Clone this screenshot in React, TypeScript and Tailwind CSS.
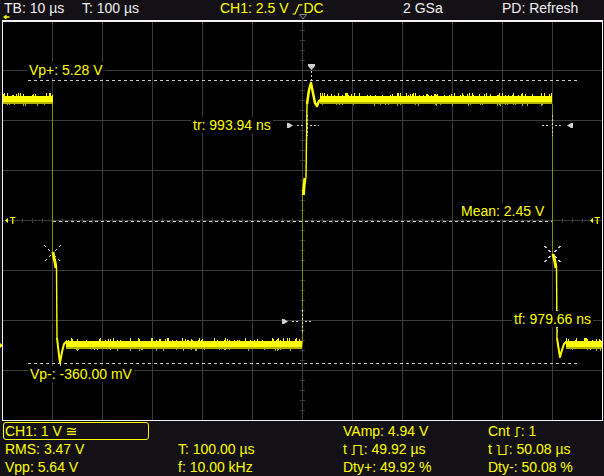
import React from "react";

const YEL = "#ffff00";
const OLIVE = "#8a8a00";
const DOT = "#cfcfcf";
const GRID = "#3c3c3c";

// small deterministic noise so the trace bands look sampled
function makeRng(seed: number) {
  let s = seed;
  return () => {
    s = (s * 16807) % 2147483647;
    return s / 2147483647;
  };
}

function band(x0: number, x1: number, top: number, bottom: number, seed: number) {
  const r = makeRng(seed);
  let hi = "";
  let lo = "";
  for (let x = x0; x < x1; x++) {
    const t = top - (r() < 0.3 ? 1 + Math.floor(r() * 3) : 0);
    const b = bottom + (r() < 0.15 ? 1 + Math.floor(r() * 2) : 0);
    hi += `M${x + 0.5} ${t}V${bottom - 2}`;
    lo += `M${x + 0.5} ${bottom - 2}V${b}`;
  }
  return { hi, lo };
}

const bands = [
  band(3, 53, 96, 104, 11),
  band(66, 302, 341, 349, 23),
  band(320, 552, 96, 104, 37),
  band(566, 602, 341, 349, 51),
];

function Sparkle({ x, y }: { x: number; y: number }) {
  const segs: string[] = [];
  for (const [dx, dy] of [
    [1, 1],
    [1, -1],
    [-1, 1],
    [-1, -1],
  ]) {
    segs.push(`M${x + dx * 2} ${y + dy * 2}L${x + dx * 4} ${y + dy * 4}`);
    segs.push(`M${x + dx * 6} ${y + dy * 6}L${x + dx * 8} ${y + dy * 8}`);
  }
  return <path d={segs.join("")} stroke={DOT} strokeWidth={1} />;
}

function Scope() {
  const vLines = Array.from({ length: 11 }, (_, i) => 2 + 50 * (i + 1) + 0.5);
  const hLines = Array.from({ length: 7 }, (_, i) => 20 + 50 * (i + 1) + 0.5);
  let ticks = "";
  for (let x = 12; x < 602; x += 10) {
    if ((x - 2) % 50 !== 0) ticks += `M${x + 0.5} 218V223`;
  }
  for (let y = 30; y < 420; y += 10) {
    if ((y - 20) % 50 !== 0) ticks += `M300 ${y + 0.5}H305`;
  }

  return (
    <svg
      className="absolute inset-0"
      width={604}
      height={401}
      viewBox="0 20 604 401"
      shapeRendering="crispEdges"
    >
      <rect x={2} y={20} width={601} height={401} fill="#000" />
      {vLines.map((x) => (
        <line key={`v${x}`} x1={x} y1={20} x2={x} y2={420} stroke={GRID} />
      ))}
      {hLines.map((y) => (
        <line key={`h${y}`} x1={2} y1={y} x2={602} y2={y} stroke={GRID} />
      ))}
      <path d={ticks} stroke={GRID} />

      {/* measurement reference lines */}
      <g stroke={DOT} strokeDasharray="3 3">
        <line x1={28} y1={80.5} x2={578} y2={80.5} />
        <line x1={53} y1={221.5} x2={552} y2={221.5} />
        <line x1={28} y1={363.5} x2={578} y2={363.5} />
      </g>

      {/* slow edges drawn faint */}
      <g stroke={OLIVE}>
        <line x1={52.5} y1={104} x2={52.5} y2={252} />
        <line x1={302.5} y1={190} x2={302.5} y2={345} />
        <line x1={552.5} y1={104} x2={552.5} y2={254} />
      </g>

      {/* trace */}
      {bands.map((b, i) => (
        <g key={i}>
          <path d={b.lo} stroke="#b4b400" />
          <path d={b.hi} stroke={YEL} />
        </g>
      ))}
      <g fill="none" stroke={YEL} shapeRendering="auto" strokeLinejoin="round">
        <polyline points="53,252 54,258 55,262 56,268" strokeWidth={3} />
        <polyline points="56.5,268 57,338" strokeWidth={1.4} />
        <polyline points="57,338 59,355 60,363 62,352 64,344 67,341" strokeWidth={2} />

        <polyline points="303.5,195 304,186 305,178" strokeWidth={3} />
        <polyline points="306,178 307,104" strokeWidth={1.4} />
        <polyline points="307,104 309,90 311,83 313,93 315,103 317,106 319,101 322,99" strokeWidth={2.5} />

        <polyline points="553,254 555,262 556,268" strokeWidth={3} />
        <polyline points="556.5,268 557,338" strokeWidth={1.4} />
        <polyline points="557,338 559,351 560,357 562,350 564,344 567,341" strokeWidth={2} />
      </g>

      {/* cursors */}
      <g stroke={DOT} strokeDasharray="2 2">
        <line x1={311.5} y1={71} x2={311.5} y2={82} />
        <line x1={297} y1={125.5} x2={305} y2={125.5} />
        <line x1={310} y1={125.5} x2={319} y2={125.5} />
        <line x1={307.5} y1={115} x2={307.5} y2={136} />
        <line x1={542} y1={125.5} x2={550} y2={125.5} />
        <line x1={555} y1={125.5} x2={563} y2={125.5} />
        <line x1={552.5} y1={115} x2={552.5} y2={136} />
        <line x1={292} y1={321.5} x2={299} y2={321.5} />
        <line x1={305} y1={321.5} x2={313} y2={321.5} />
        <line x1={302.5} y1={310} x2={302.5} y2={333} />
        <line x1={557.5} y1={310} x2={557.5} y2={333} />
        <line x1={60.5} y1={364} x2={60.5} y2={377} />
      </g>
      <g fill={DOT} shapeRendering="auto">
        <polygon points="308,64 315,64 315,66 311.5,70 308,66" />
        <polygon points="287,123 289,123 293,125.5 289,128 287,128" />
        <polygon points="573,123 571,123 567,125.5 571,128 573,128" />
        <polygon points="282,319 284,319 288,321.5 284,324 282,324" />
        <polygon points="60.5,377 63,380 63,381.5 58,381.5 58,380" />
      </g>
      <Sparkle x={52.5} y={253.5} />
      <Sparkle x={552.5} y={254} />

      {/* trigger level and channel offset markers */}
      <g fill={YEL} stroke={YEL} shapeRendering="auto">
        <polygon points="5,220.5 8,218 8,223" stroke="none" />
        <path d="M10 217.5H15.5M12.75 217.5V224" fill="none" strokeWidth={1.2} />
        <polygon points="590,220.5 593,218 593,223" stroke="none" />
        <path d="M594.5 217.5H600M597.25 217.5V224" fill="none" strokeWidth={1.2} />
        <polygon points="0,343 3,345.5 0,348" stroke="none" />
      </g>

      <rect x={2.5} y={20.5} width={600} height={399.5} fill="none" stroke="#f2f2f2" />
      <line x1={2} y1={21.5} x2={603} y2={21.5} stroke="#f2f2f2" />
    </svg>
  );
}

function Label({ className, children }: { className: string; children: React.ReactNode }) {
  return (
    <span
      className={`absolute bg-black px-[2px] leading-[16px] whitespace-nowrap text-[#ffff00] ${className}`}
    >
      {children}
    </span>
  );
}

function RiseEdge() {
  return (
    <svg width={7} height={10} className="inline-block" viewBox="0 0 7 10">
      <polyline points="0.5,9.5 3,9.5 3,0.5 6.5,0.5" fill="none" stroke={YEL} strokeWidth={1.2} />
    </svg>
  );
}

function PosPulse() {
  return (
    <svg width={13} height={10} className="inline-block" viewBox="0 0 13 10">
      <polyline
        points="0.5,9.5 3,9.5 3,0.5 10,0.5 10,9.5 12.5,9.5"
        fill="none"
        stroke={YEL}
        strokeWidth={1.2}
      />
    </svg>
  );
}

function NegPulse() {
  return (
    <svg width={13} height={10} className="inline-block" viewBox="0 0 13 10">
      <polyline
        points="0.5,0.5 3,0.5 3,9.5 10,9.5 10,0.5 12.5,0.5"
        fill="none"
        stroke={YEL}
        strokeWidth={1.2}
      />
    </svg>
  );
}

function SlopeIcon() {
  return (
    <svg width={11} height={11} className="inline-block" viewBox="0 0 11 11">
      <polyline points="0.5,10 3,10 7,0.8 10.5,0.8" fill="none" stroke={YEL} strokeWidth={1.2} />
    </svg>
  );
}

export default function App() {
  return (
    <div
      className="w-[604px] h-[476px] overflow-hidden bg-[#131116] text-[14px]"
      style={{ fontFamily: '"Liberation Sans", "DejaVu Sans", Arial, sans-serif' }}
    >
      {/* status bar */}
      <div className="relative h-[20px] flex pl-[4px] leading-[16px] text-[#f0f0f0] whitespace-nowrap">
        <span className="w-[78px]">TB: 10 µs</span>
        <span className="w-[138px]">T: 100 µs</span>
        <span className="w-[183px] text-[#ffff00]">
          CH1: 2.5 V <SlopeIcon />DC
        </span>
        <span className="w-[99px]">2 GSa</span>
        <span>PD: Refresh</span>
        <svg className="absolute left-0 top-0" width={604} height={20}>
          <polygon points="3,17 6.5,14.5 6.5,19.5" fill={YEL} />
          <line x1={6} y1={17} x2={9.5} y2={17} stroke={YEL} strokeWidth={1.5} />
          <polygon points="299.5,14.5 306.5,14.5 303,19" fill="none" stroke="#8a8a8a" />
        </svg>
      </div>

      {/* waveform area */}
      <div className="relative h-[401px]">
        <Scope />
        <Label className="left-[27px] top-[42px]">Vp+: 5.28 V</Label>
        <Label className="left-[191px] top-[97px]">tr: 993.94 ns</Label>
        <Label className="left-[459px] top-[183px]">Mean: 2.45 V</Label>
        <Label className="left-[512px] top-[291px]">tf: 979.66 ns</Label>
        <Label className="left-[28px] top-[346px]">Vp-: -360.00 mV</Label>
      </div>

      {/* measurements */}
      <div className="grid grid-cols-[175px_165px_145px_1fr] auto-rows-[18px] pt-[1px] pl-[3px] leading-[18px] text-[#ffff00] whitespace-nowrap">
        <div className="col-span-2">
          <div className="w-[146px] h-[18px] border border-[#ffff00] rounded-[3px] pl-[1px] leading-[16px]">
            CH1: 1 V ≅
          </div>
        </div>
        <div>VAmp: 4.94 V</div>
        <div>
          Cnt <RiseEdge />: 1
        </div>

        <div className="pl-[2px]">RMS: 3.47 V</div>
        <div>T: 100.00 µs</div>
        <div>
          t <PosPulse />: 49.92 µs
        </div>
        <div>
          t <NegPulse />: 50.08 µs
        </div>

        <div className="pl-[2px]">Vpp: 5.64 V</div>
        <div>f: 10.00 kHz</div>
        <div>Dty+: 49.92 %</div>
        <div>Dty-: 50.08 %</div>
      </div>
    </div>
  );
}
